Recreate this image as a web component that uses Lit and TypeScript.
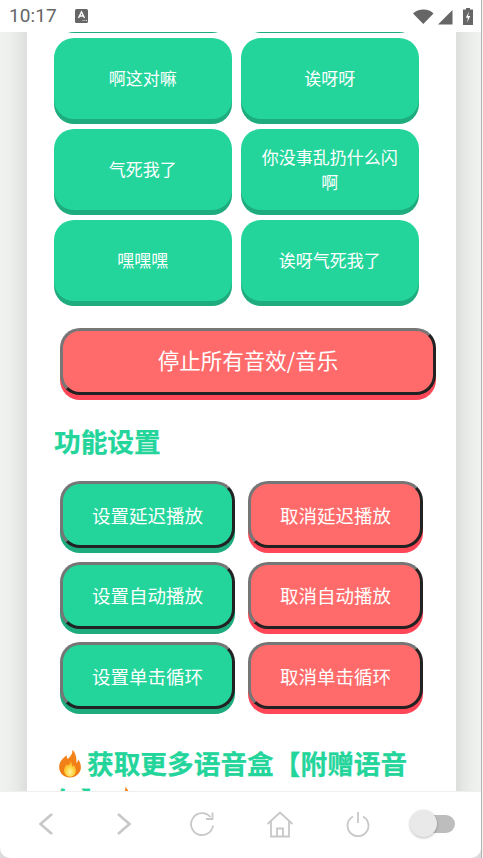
import { LitElement, html, css, svg } from "lit";
import { customElement } from "lit/decorators.js";

const fire = svg`<svg class="fire" viewBox="0 0 32 38" aria-hidden="true">
  <defs>
    <linearGradient id="fo" x1="0" y1="0" x2="0" y2="1"><stop offset="0" stop-color="#f5851f"/><stop offset="1" stop-color="#ee7a12"/></linearGradient>
    <radialGradient id="fi" cx=".5" cy=".72" r=".6"><stop offset="0" stop-color="#fff3a0"/><stop offset=".6" stop-color="#fdd23a"/><stop offset="1" stop-color="#f9a825"/></radialGradient>
  </defs>
  <path fill="url(#fo)" d="M19 .5c1 6-3 9.500-6 12.500-1-1.500-1.500-3-1.500-5C6 12 1.500 17 1.500 23.500 1.500 32 8 37.500 16 37.500S30.500 32 30.500 24c0-4-1.500-8-3.500-10.500-.3 2-1.200 3.500-2.500 4.500C25 11 23.500 4 19 .5z"/>
  <path fill="url(#fi)" d="M16.500 15c.5 3-1.500 5-3.500 7-.7-.7-1-1.500-1.200-2.500C9.500 22 8 25 8 28c0 5 3.600 8.500 8 8.500s8-3.500 8-8c0-3.500-1.500-6-3.500-8-.2 1.200-.7 2-1.500 2.700 0-3.200-.8-6-2.500-8.200z"/>
</svg>`;

@customElement("app-root")
export class AppRoot extends LitElement {
  static styles = css`
    :host {
      display: flex;
      width: 483px;
      height: 858px;
      overflow: hidden;
      background: #fff;
      font-family: "Noto Sans CJK SC", "Noto Sans", sans-serif;
    }
    .screen {
      width: 481px;
      height: 858px;
      display: flex;
      flex-direction: column;
      flex: none;
      background: #dcdcdc;
    }
    .edge {
      width: 2px;
      flex: none;
      background: linear-gradient(90deg, #b4b4b4 0 1px, #f2f2f2 1px);
    }
    .status {
      height: 32px;
      flex: none;
      background: #fff;
      display: flex;
      align-items: center;
      color: #666;
      padding: 0 7px 0 9px;
    }
    .time {
      font: 19px/32px Roboto, sans-serif;
      letter-spacing: 0.1px;
    }
    .a-badge {
      margin-left: 18px;
      width: 13px;
      height: 14px;
      display: block;
    }
    .status-right {
      margin-left: auto;
      display: block;
      width: 61px;
      height: 20px;
    }
    .page {
      flex: 1;
      min-height: 0;
      overflow: hidden;
      background: #f1f3f0;
      padding: 0 25px 0 27px;
    }
    .card {
      background: #fff;
      box-shadow: 0 0 26px rgba(0, 0, 0, 0.17);
      padding: 0 27px 40px;
      margin-top: -85px;
      height: 1000px;
      box-sizing: border-box;
      overflow: hidden;
    }
    .sounds {
      display: grid;
      grid-template-columns: 187px 187px;
      row-gap: 10px;
    }
    button {
      font-family: inherit;
      color: #fff;
      cursor: pointer;
      margin: 0;
      box-sizing: border-box;
    }
    .sound {
      width: 177.500px;
      height: 81px;
      border: none;
      border-radius: 20px;
      background: #23d59b;
      box-shadow: 0 5px 0 #1eab7d;
      font-size: 17px;
      line-height: 25px;
      padding: 0 15px 2px;
    }
    .stop {
      display: block;
      width: 376px;
      height: 67px;
      margin: 27px 0 0 6px;
      font-size: 21.500px;
      padding: 0 0 4px;
    }
    .raised {
      border: 3px solid;
      border-color: #767676 #222 #222 #767676;
      border-radius: 20px;
    }
    .red {
      background: #ff6b6b;
      box-shadow: 0 5px 0 #ff4757;
    }
    .green {
      background: #23d59b;
      box-shadow: 0 5px 0 #1eab7d;
    }
    h2 {
      margin: 0;
      color: #23d59b;
      font-size: 26.700px;
      font-weight: 700;
      line-height: 37px;
      -webkit-text-stroke: 0.25px #23d59b;
    }
    .h-settings {
      margin-top: 27px;
    }
    .settings {
      margin: 22px 0 0 6px;
      display: grid;
      grid-template-columns: 175px 175px;
      column-gap: 13px;
      row-gap: 13.500px;
    }
    .settings button {
      height: 67px;
      font-size: 18.500px;
      padding: 0;
    }
    .h-more {
      margin-top: 35px;
    }
    .fire {
      width: 24px;
      height: 29px;
      margin: 0 5px 0 4px;
      vertical-align: -4px;
    }
    nav {
      height: 67px;
      flex: none;
      box-sizing: border-box;
      background: #fff;
      border-top: 1px solid #efefef;
      border-radius: 0 0 10px 10px;
      display: grid;
      grid-template-columns: repeat(6, 78px);
      padding: 0 6.500px 2px;
      align-items: center;
      justify-items: center;
    }
    nav svg {
      display: block;
      fill: none;
      stroke: #c8c8c8;
      stroke-width: 1.800;
    }
    nav svg.nudge {
      margin-left: 1.500px;
    }
    .toggle {
      width: 45px;
      height: 28px;
      margin-right: 7px;
      display: flex;
      align-items: center;
      position: relative;
    }
    .track {
      margin-left: 10px;
      width: 35px;
      height: 18px;
      border-radius: 9px;
      background: #bdbdbd;
    }
    .thumb {
      position: absolute;
      left: 0;
      top: 0;
      width: 27px;
      height: 27px;
      border-radius: 50%;
      background: #e9e9e9;
      box-shadow: 0 1px 3px rgba(0, 0, 0, 0.28);
    }
  `;

  private soundRows = ["", "", "啊这对嘛", "诶呀呀", "气死我了", "你没事乱扔什么闪啊", "嘿嘿嘿", "诶呀气死我了"];
  private settings = [
    ["设置延迟播放", "取消延迟播放"],
    ["设置自动播放", "取消自动播放"],
    ["设置单击循环", "取消单击循环"],
  ];

  render() {
    return html`
      <div class="screen">
        <header class="status">
          <span class="time">10:17</span>
          <svg class="a-badge" viewBox="0 0 13 14">
            <rect width="13" height="14" rx="1.500" fill="#666"/>
            <path d="M3.500 9 6.500 2.800 9.500 9M4.600 7h3.800" fill="none" stroke="#fff" stroke-width="1.400"/>
            <path d="M7.500 11.500h1M9.300 11.500h1M11 11.500h1" stroke="#ddd" stroke-width="1"/>
          </svg>
          <svg class="status-right" viewBox="0 0 61 20">
            <path d="M0 7.500C2.800 4.800 6.200 3.500 10.500 3.500S18 4.800 20.500 7.500L10.300 18z" fill="#666"/>
            <path d="M25 18.500 39.500 4v14.500z" fill="#666"/>
            <path d="M50 3.500h3V2h4v1.500h3V19H50z" fill="#666"/>
            <path d="M56 5.500 52.800 11.800h2.200l-1 5 3.300-6.800H55z" fill="#fff"/>
          </svg>
        </header>
        <main class="page">
          <section class="card">
            <div class="sounds">
              ${this.soundRows.map((s) => html`<button class="sound">${s}</button>`)}
            </div>
            <button class="stop raised red">停止所有音效/音乐</button>
            <h2 class="h-settings">功能设置</h2>
            <div class="settings">
              ${this.settings.map(
                ([on, off]) => html`
                  <button class="raised green">${on}</button>
                  <button class="raised red">${off}</button>
                `
              )}
            </div>
            <h2 class="h-more">${fire}获取更多语音盒【附赠语音包】${fire}</h2>
          </section>
        </main>
        <nav>
          <svg width="16" height="24" viewBox="0 0 16 24"><path d="M14 2 2.500 12 14 22" stroke-width="2.600"/></svg>
          <svg width="16" height="24" viewBox="0 0 16 24"><path d="M2 2 13.500 12 2 22" stroke-width="2.600"/></svg>
          <svg width="26" height="26" viewBox="0 0 26 26"><path d="M21.500 6A11 11 0 1 0 24 14.500" /><path d="M23.500 1.500V8h-6.500"/></svg>
          <svg class="nudge" width="28" height="27" viewBox="0 0 28 27"><path d="M1.500 13 14 1.500 26.500 13M5 10.500V25.500H23V10.500M11 25.500v-8h6v8"/></svg>
          <svg class="nudge" width="24" height="26" viewBox="0 0 24 26"><path d="M7 5.500a10.500 10.500 0 1 0 10 0M12 1v11"/></svg>
          <div class="toggle"><div class="track"></div><div class="thumb"></div></div>
        </nav>
      </div>
      <div class="edge"></div>
    `;
  }
}
